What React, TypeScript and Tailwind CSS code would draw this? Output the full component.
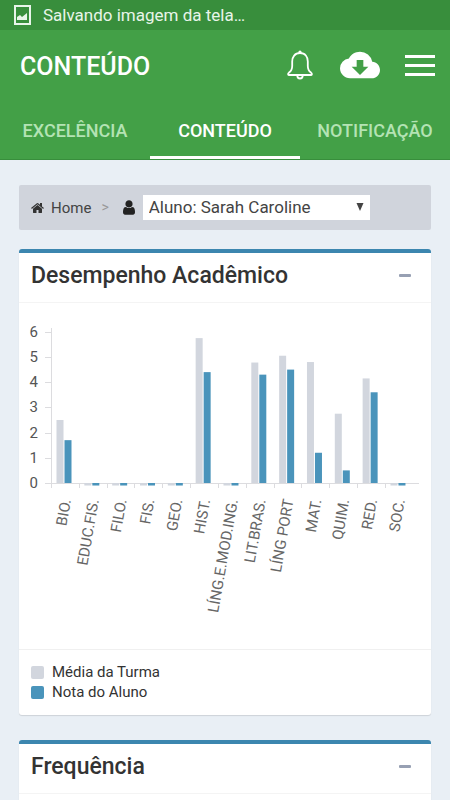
import { ReactNode, useState } from 'react'

interface Subject {
  name: string
  average: number
  grade: number
}

interface PanelProps {
  title: string
  children?: ReactNode
}

const TABS = ['EXCELÊNCIA', 'CONTEÚDO', 'NOTIFICAÇÃO']

// -0.1 marks a subject without grades yet
const SUBJECTS: Subject[] = [
  { name: 'BIO.', average: 2.5, grade: 1.7 },
  { name: 'EDUC.FIS.', average: -0.1, grade: -0.1 },
  { name: 'FILO.', average: -0.1, grade: -0.1 },
  { name: 'FIS.', average: -0.1, grade: -0.1 },
  { name: 'GEO.', average: -0.1, grade: -0.1 },
  { name: 'HIST.', average: 5.75, grade: 4.4 },
  { name: 'LÍNG.E.MOD.ING.', average: -0.1, grade: -0.1 },
  { name: 'LIT.BRAS.', average: 4.78, grade: 4.3 },
  { name: 'LÍNG PORT', average: 5.05, grade: 4.5 },
  { name: 'MAT.', average: 4.8, grade: 1.2 },
  { name: 'QUIM.', average: 2.75, grade: 0.5 },
  { name: 'RED.', average: 4.15, grade: 3.6 },
  { name: 'SOC.', average: -0.1, grade: -0.1 },
]

const UNIT = 25.2
const STEP = 27.83
const AXIS_X = 20
const AXIS_Y = 164

function GradesChart() {
  const bar = (x: number, value: number, color: string) => (
    <rect
      x={x}
      y={value < 0 ? AXIS_Y : AXIS_Y - value * UNIT}
      width={7}
      height={Math.abs(value) * UNIT}
      fill={color}
    />
  )

  return (
    <svg viewBox="0 0 388 316" className="block w-full overflow-visible" role="img" aria-label="Desempenho Acadêmico">
      <g stroke="#dcdcdf" strokeWidth="1">
        <path d={`M${AXIS_X + 0.5} 9V169M14 ${AXIS_Y + 0.5}H388`} />
        {[1, 2, 3, 4, 5, 6].map(n => (
          <path key={n} d={`M14 ${Math.round(AXIS_Y - n * UNIT) + 0.5}h6`} />
        ))}
        {SUBJECTS.map((s, i) => (
          <path key={s.name} d={`M${Math.round(AXIS_X + i * STEP) + 0.5} ${AXIS_Y}v5`} />
        ))}
      </g>
      <g fill="#555" fontSize="15" textAnchor="end">
        {[0, 1, 2, 3, 4, 5, 6].map(n => (
          <text key={n} x={7} y={AXIS_Y - n * UNIT + 5}>{n}</text>
        ))}
      </g>
      {SUBJECTS.map((s, i) => {
        const x = AXIS_X + i * STEP
        return (
          <g key={s.name}>
            {bar(x + 5.5, s.average, '#d2d6de')}
            {bar(x + 13.5, s.grade, '#4a94bb')}
            <text
              transform={`translate(${x + 20} 181) rotate(-80)`}
              textAnchor="end"
              fontSize="15"
              fill="#666"
            >
              {s.name}
            </text>
          </g>
        )
      })}
    </svg>
  )
}

function Panel({ title, children }: PanelProps) {
  const [open, setOpen] = useState(true)

  return (
    <section className="mb-[25px] rounded-[3px] border-t-4 border-[#3c86af] bg-white shadow-[0_1px_1px_rgba(0,0,0,0.12)]">
      <div className="flex h-[50px] items-center justify-between border-b border-[#f4f4f4] pb-1 pl-3 pr-5">
        <h3 className="text-[23px] font-medium leading-7 text-[#333]">{title}</h3>
        <button aria-label="Minimizar" onClick={() => setOpen(!open)} className="py-2">
          <span className="block h-[3px] w-3 rounded-[1px] bg-[#97a0b3]" />
        </button>
      </div>
      {open && children}
    </section>
  )
}

export default function App() {
  const [tab, setTab] = useState('CONTEÚDO')

  return (
    <div className="flex h-screen flex-col overflow-hidden bg-[#e9eff5] font-['Roboto',sans-serif]">
      <div className="flex h-[30px] shrink-0 items-center gap-3 bg-[#388e3c] px-3.5 text-white">
        <svg viewBox="0 0 17 20" className="h-5 w-[17px]">
          <rect x="1" y="1" width="15" height="18" fill="none" stroke="#e8f5e9" strokeWidth="2" />
          <path d="M3 15V12l3-2 2 2 5-4v7z" fill="#e8f5e9" />
        </svg>
        <span className="text-[17px] leading-6 text-[#e8f5e9]">Salvando imagem da tela…</span>
      </div>

      <header className="shrink-0 border-b border-[#388e3c] bg-[#43a047] text-white">
        <div className="flex h-[70px] items-center pl-5 pr-[15px]">
          <h1 className="flex-1 pt-1 text-[25px] font-medium leading-8">CONTEÚDO</h1>
          <div className="flex items-center gap-[25px]">
            <button aria-label="Notificações">
              <svg viewBox="0 0 28 30" className="h-[30px] w-7" fill="none" stroke="#fff" strokeWidth="1.8" strokeLinejoin="round">
                <path d="M13 3C7.800 3 5.200 7 5.200 11.500V16C5.200 19.500 4 21.200 2 22.600 .6 23.700 1 25 2.300 25H23.700C25 25 25.400 23.700 24 22.600 22 21.200 20.800 19.500 20.800 16V11.500C20.800 7 18.200 3 13 3Z" />
                <path d="M10.300 25.500C10.300 29.500 15.700 29.500 15.700 25.500" />
                <circle cx="13" cy="2" r="1.600" fill="#fff" stroke="none" />
              </svg>
            </button>
            <button aria-label="Baixar">
              <svg viewBox="0 0 24 24" className="size-10" fill="#fff">
                <path d="M19.350 10.040A7.490 7.490 0 0 0 12 4C9.110 4 6.600 5.640 5.350 8.040A5.994 5.994 0 0 0 0 14c0 3.310 2.690 6 6 6h13c2.760 0 5-2.240 5-5 0-2.640-2.050-4.780-4.650-4.960zM17 13l-5 5-5-5h3V9h4v4h3z" />
              </svg>
            </button>
            <button aria-label="Menu" className="flex w-[30px] flex-col gap-1.5">
              <span className="h-[3px] w-full bg-white" />
              <span className="h-[3px] w-full bg-white" />
              <span className="h-[3px] w-full bg-white" />
            </button>
          </div>
        </div>
        <nav className="grid h-[59px] grid-cols-3">
          {TABS.map(name => (
            <button
              key={name}
              onClick={() => setTab(name)}
              className={
                name === tab
                  ? 'border-b-[3px] border-white pt-1 text-[18px] font-medium text-white'
                  : 'border-b-[3px] border-transparent pt-1 text-[18px] font-medium text-[#b4e3b4]'
              }
            >
              {name}
            </button>
          ))}
        </nav>
      </header>

      <main className="min-h-0 flex-1 overflow-hidden px-[19px] pt-[25px]">
        <div className="mb-[19px] flex h-[45px] items-center rounded-[2px] bg-[#d0d4dc] pl-3 text-[#444]">
          <a href="#home" className="flex items-center gap-1.5 text-[15px] leading-5">
            <svg viewBox="0 0 1792 1792" className="size-3.5" fill="#333">
              <path d="M1408 992v480q0 26-19 45t-45 19h-384v-384h-256v384h-384q-26 0-45-19t-19-45v-480q0-1 .5-3t.5-3l575-474 575 474q1 2 1 6zm223-69l-62 74q-8 9-21 11h-3q-13 0-21-7l-692-577-692 577q-12 8-24 7-13-2-21-11l-62-74q-8-10-7-23.500t11-21.500l719-599q32-26 76-26t76 26l244 204v-195q0-14 9-23t23-9h192q14 0 23 9t9 23v408l219 182q10 8 11 21.500t-7 23.500z" />
            </svg>
            Home
          </a>
          <span className="ml-2.5 text-[14px] text-[#999]">&gt;</span>
          <svg viewBox="256 128 1280 1536" className="ml-3.5 h-[15px] w-3" fill="#222">
            <path d="M1536 1399q0 109-62.500 187t-150.500 78h-854q-88 0-150.500-78t-62.500-187q0-85 8.500-160.500t31.500-152 58.500-131 94-89 134.500-34.500q131 128 313 128t313-128q76 0 134.500 34.500t94 89 58.500 131 31.500 152 8.500 160.500zm-256-887q0 159-112.500 271.500t-271.500 112.500-271.500-112.500-112.500-271.500 112.500-271.500 271.500-112.500 271.500 112.500 112.500 271.500z" />
          </svg>
          <div className="relative ml-2 w-[227px]">
            <select aria-label="Aluno" className="block h-[25px] w-full appearance-none bg-white pb-0.5 pl-1.5 pr-6 text-[17px] leading-6 text-[#444]">
              <option>Aluno: Sarah Caroline</option>
            </select>
            <svg viewBox="0 0 8 8" className="pointer-events-none absolute right-1.5 top-2 size-2" fill="#444">
              <path d="M0.500 0h7L4 8z" />
            </svg>
          </div>
        </div>

        <Panel title="Desempenho Acadêmico">
          <div className="px-3 pb-3.5 pt-4">
            <GradesChart />
          </div>
          <ul className="border-t border-[#f0f0f0] px-3 pb-[13px] pt-3 text-[15px] leading-5 text-[#333]">
            <li className="flex items-center gap-2">
              <span className="size-[13px] rounded-[2px] bg-[#d2d6de]" />
              Média da Turma
            </li>
            <li className="flex items-center gap-2">
              <span className="size-[13px] rounded-[2px] bg-[#4a94bb]" />
              Nota do Aluno
            </li>
          </ul>
        </Panel>

        <Panel title="Frequência">
          <div className="h-40" />
        </Panel>
      </main>
    </div>
  )
}
